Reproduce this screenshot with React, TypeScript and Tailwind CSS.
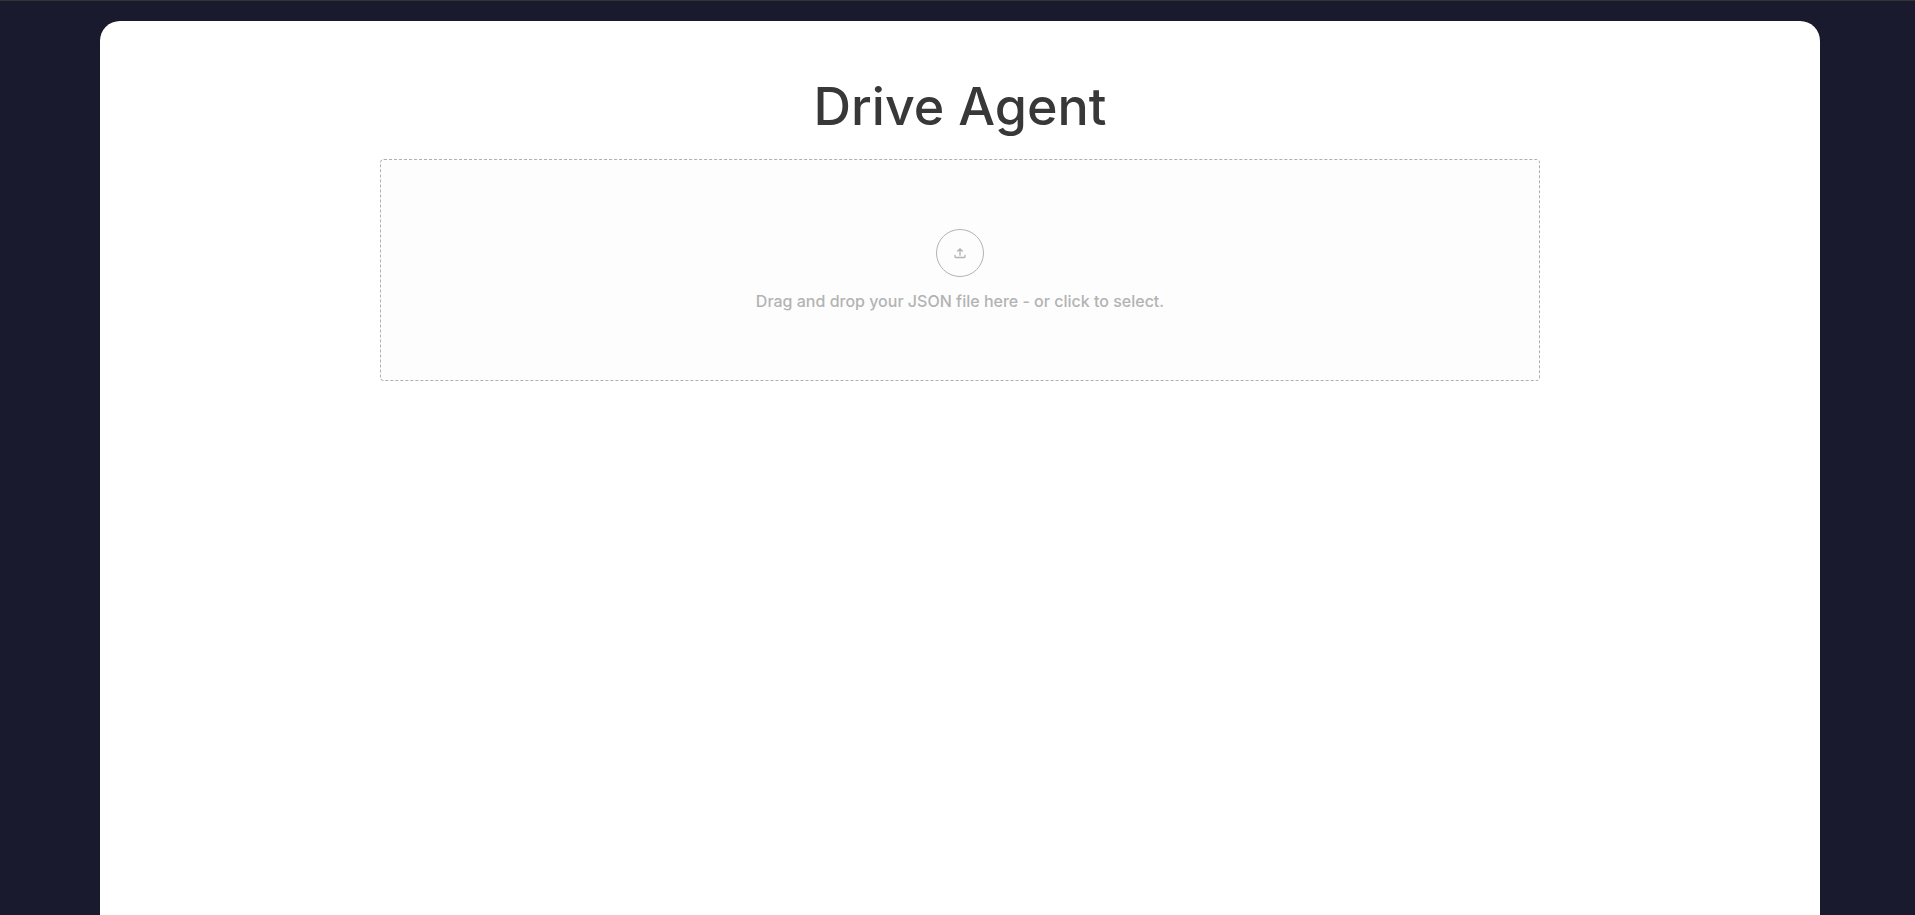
import { useState } from "react";

function UploadIcon() {
  return (
    <svg
      className="size-4"
      viewBox="0 0 16 16"
      fill="none"
      stroke="currentColor"
      strokeWidth="1.3"
      aria-hidden="true"
    >
      <path d="M8 10.8V4M5.3 6.5 8 3.8l2.7 2.7M3 9.8v1.9c0 .5.3.8.8.8h8.4c.5 0 .8-.3.8-.8V9.8" />
    </svg>
  );
}

function DropZone() {
  const [fileName, setFileName] = useState("");

  return (
    <label
      htmlFor="json-file"
      onDragOver={(e) => e.preventDefault()}
      onDrop={(e) => {
        e.preventDefault();
        setFileName(e.dataTransfer.files[0]?.name ?? "");
      }}
      className="flex w-full max-w-[1160px] cursor-pointer flex-col items-center gap-3 rounded border border-dashed border-[#b0b0b0] bg-[#fdfdfd] pt-[69px] pb-[67px] text-[#b3b3b3]"
    >
      <span className="flex size-12 items-center justify-center rounded-full border border-[#b3b3b3]">
        <UploadIcon />
      </span>
      <span className="text-base leading-6 font-medium">
        {fileName || "Drag and drop your JSON file here - or click to select."}
      </span>
      <input
        id="json-file"
        type="file"
        accept="application/json"
        className="sr-only"
        onChange={(e) => setFileName(e.target.files?.[0]?.name ?? "")}
      />
    </label>
  );
}

export default function App() {
  return (
    <div className="flex min-h-screen flex-col border-t border-[#333333] bg-[#1a1a2e] pt-5 pr-[95px] pl-[100px] font-['Inter',sans-serif]">
      <main className="flex grow flex-col items-center rounded-t-[20px] bg-white px-10 pt-[50px]">
        <h1 className="mb-4 text-[52px] leading-[72px] font-medium text-[#383838]">Drive Agent</h1>
        <DropZone />
      </main>
    </div>
  );
}
